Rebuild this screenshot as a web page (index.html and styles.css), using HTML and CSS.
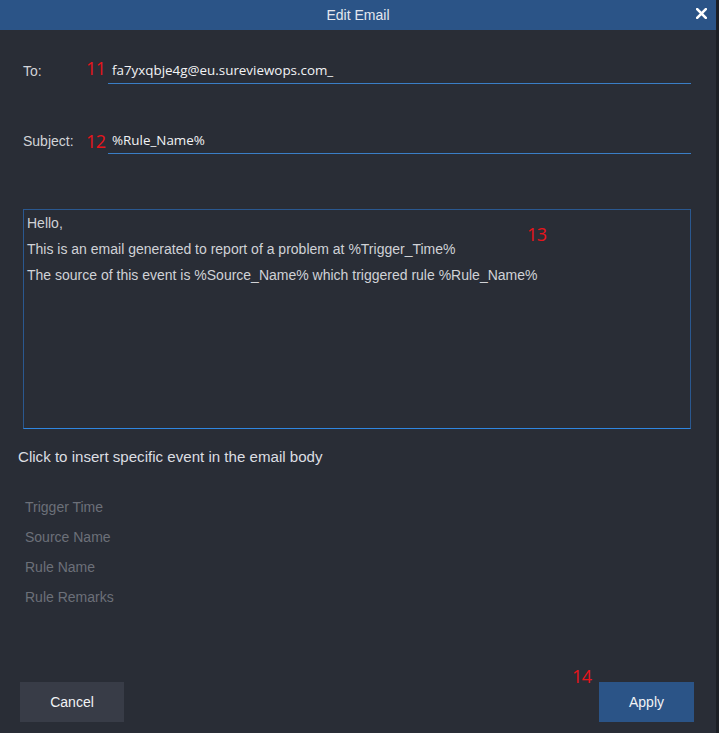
FILE: index.html
```html
<!DOCTYPE html>
<html>
<head>
<meta charset="utf-8">
<link rel="stylesheet" href="styles.css">
</head>
<body>
<div class="dialog">
  <div class="header">
    <span class="title">Edit Email</span>
    <span class="close"><svg width="11" height="11" viewBox="0 0 11 11"><path d="M1.2 1.2 L9.8 9.8 M9.8 1.2 L1.2 9.8" stroke="#ffffff" stroke-width="2.6" stroke-linecap="square"/></svg></span>
  </div>
  <div class="content">
    <div class="row row-to">
      <span class="label">To:</span>
      <span class="num">11</span>
      <div class="field">fa7yxqbje4g@eu.sureviewops.com_</div>
    </div>
    <div class="row row-subject">
      <span class="label">Subject:</span>
      <span class="num num-sub">12</span>
      <div class="field">%Rule_Name%</div>
    </div>
    <div class="body-box">
      <p>Hello,</p>
      <p>This is an email generated to report of a problem at %Trigger_Time%</p>
      <p>The source of this event is %Source_Name% which triggered rule %Rule_Name%</p>
      <span class="num anno-13">13</span>
    </div>
    <div class="hint">Click to insert specific event in the email body</div>
    <ul class="events">
      <li>Trigger Time</li>
      <li>Source Name</li>
      <li>Rule Name</li>
      <li>Rule Remarks</li>
    </ul>
  </div>
  <div class="footer">
    <button class="btn btn-cancel">Cancel</button>
    <button class="btn btn-apply">Apply<span class="num anno-14">14</span></button>
  </div>
</div>
</body>
</html>
```
FILE: styles.css
```css
html, body {
  margin: 0;
  padding: 0;
  background: #1c1f25;
  font-family: "Liberation Sans", Arial, sans-serif;
}
.dialog {
  width: 716px;
  height: 733px;
  background: #292d36;
  display: flex;
  flex-direction: column;
}
.header {
  height: 30px;
  background: #2b5487;
  display: flex;
  align-items: center;
  justify-content: center;
  position: relative;
}
.title {
  color: #e4e8ef;
  font-size: 14px;
}
.close {
  position: absolute;
  right: 9px;
  top: 8px;
  width: 11px;
  height: 11px;
  display: flex;
}
.content {
  padding: 0 25px 0 23px;
  display: flex;
  flex-direction: column;
}
.row {
  display: flex;
  align-items: center;
  height: 26px;
}
.row-to { margin-top: 28px; }
.row-subject { margin-top: 44px; }
.label {
  width: 63px;
  color: #d2d4d8;
  font-size: 14px;
}
.num {
  color: #e8141b;
  font-family: "Open Sans", "Noto Sans", sans-serif;
  font-size: 18px;
  line-height: 18px;
  letter-spacing: -0.5px;
}
.row .num {
  width: 22px;
  align-self: flex-start;
  margin-top: 1px;
}
.row .num-sub { margin-top: 4px; }
.field {
  flex: 1;
  height: 25px;
  border-bottom: 1px solid #3a7ec6;
  color: #f2f3f5;
  font-family: "Open Sans", "Noto Sans", sans-serif;
  font-size: 13.4px;
  line-height: 24px;
  padding-left: 4px;
  box-sizing: content-box;
}
.body-box {
  margin-top: 55px;
  height: 218px;
  border: 1px solid #2a5890;
  border-bottom-color: #2f86e0;
  position: relative;
  padding-left: 3px;
}
.body-box p {
  margin: 0;
  color: #d0d2d6;
  font-size: 14px;
  line-height: 26px;
}
.anno-13 {
  position: absolute;
  left: 503px;
  top: 15px;
}
.hint {
  margin-top: 18px;
  margin-left: -5px;
  color: #dcdee2;
  font-size: 15.1px;
  line-height: 20px;
}
.events {
  list-style: none;
  margin: 25px 0 0;
  padding: 0 0 0 2px;
}
.events li {
  color: #6c7079;
  font-size: 14px;
  line-height: 30px;
}
.footer {
  margin-top: auto;
  padding: 0 22px 11px 20px;
  display: flex;
  justify-content: space-between;
}
.btn {
  height: 40px;
  border: none;
  color: #f2f3f5;
  font-family: "Liberation Sans", Arial, sans-serif;
  font-size: 14px;
  padding: 0;
  position: relative;
}
.btn-cancel {
  width: 104px;
  background: #383c47;
}
.btn-apply {
  width: 95px;
  background: #2b5487;
}
.anno-14 {
  position: absolute;
  left: -27px;
  top: -15px;
}
```
